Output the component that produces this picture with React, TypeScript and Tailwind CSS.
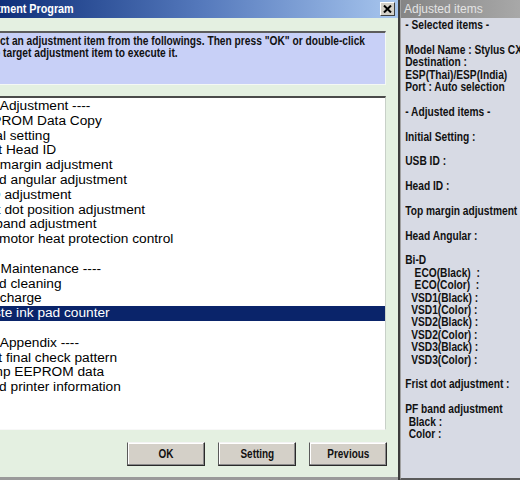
import React from "react";

const SANS = { fontFamily: '"Liberation Sans", Arial, sans-serif' };

const listItems = [
  "----- Adjustment ----",
  "EEPROM Data Copy",
  "Initial setting",
  "Print Head ID",
  "Top margin adjustment",
  "Head angular adjustment",
  "Bi-D adjustment",
  "First dot position adjustment",
  "PF  motor heat protection control",
  "",
  "----- Maintenance ----",
  "Head cleaning",
  "Ink  charge",
  "Waste ink pad counter",
  "",
  "----- Appendix ----",
  "Print final check pattern",
  "Dump EEPROM data",
  "Read printer information",
];

// insert PF band before PF motor
listItems.splice(8, 0, "PF band adjustment");

const rightLines: { t: string; pl?: string }[] = [
  { t: "- Selected items -" },
  { t: "" },
  { t: "Model Name : Stylus CX" },
  { t: "Destination :" },
  { t: "ESP(Thai)/ESP(India)" },
  { t: "Port : Auto selection" },
  { t: "" },
  { t: "- Adjusted items -" },
  { t: "" },
  { t: "Initial Setting :" },
  { t: "" },
  { t: "USB ID :" },
  { t: "" },
  { t: "Head ID :" },
  { t: "" },
  { t: "Top margin adjustment :" },
  { t: "" },
  { t: "Head Angular :" },
  { t: "" },
  { t: "Bi-D" },
  { t: "ECO(Black)  :", pl: "eco" },
  { t: "ECO(Color)  :", pl: "eco" },
  { t: "VSD1(Black) :", pl: "vsd" },
  { t: "VSD1(Color) :", pl: "vsd" },
  { t: "VSD2(Black) :", pl: "vsd" },
  { t: "VSD2(Color) :", pl: "vsd" },
  { t: "VSD3(Black) :", pl: "vsd" },
  { t: "VSD3(Color) :", pl: "vsd" },
  { t: "" },
  { t: "Frist dot adjustment :" },
  { t: "" },
  { t: "PF band adjustment" },
  { t: "Black :", pl: "pf" },
  { t: "Color :", pl: "pf" },
];

function Btn({ label }: { label: string }) {
  return (
    <button
      className="w-[78px] h-[24px] flex items-center justify-center bg-[#d4d0c8] border border-t-[#f4f4f4] border-l-[#5a5a5a] border-r-[#2a2a2a] border-b-[#2a2a2a] shadow-[inset_-1px_-1px_0_#8a8a8a,inset_1px_1px_0_#ffffff]"
    >
      <span className="inline-block scale-x-[0.83] text-[12px] font-bold text-[#111] leading-none" style={SANS}>
        {label}
      </span>
    </button>
  );
}

export default function App() {
  return (
    <div className="w-[520px] h-[480px] flex overflow-hidden bg-[#d7dae4]">
      {/* Dialog */}
      <div className="w-[398px] h-[480px] shrink-0 flex flex-col bg-[#e4f0e1] overflow-hidden border-b-[3px] border-b-[#9a9a9a]">
        {/* Title bar */}
        <div className="h-[18px] shrink-0 flex items-center justify-between bg-gradient-to-r from-[#0f2f7a] via-[#5478bb] to-[#a8c6ee] overflow-hidden">
          <span
            className="inline-block origin-left scale-x-[0.83] ml-[-33px] text-white text-[13px] font-bold whitespace-nowrap"
            style={SANS}
          >
            Adjustment Program
          </span>
          <div className="w-[15px] h-[14px] mr-[3px] bg-[#d4d0c8] border border-t-white border-l-white border-r-[#404040] border-b-[#404040] flex items-center justify-center">
            <svg width="9" height="8" viewBox="0 0 9 8">
              <path d="M1 0.5 L8 7.5 M8 0.5 L1 7.5" stroke="#000" strokeWidth="2" />
            </svg>
          </div>
        </div>

        {/* Instruction box */}
        <div className="mt-[13px] mr-[12px] h-[54px] shrink-0 bg-[#c8d0f7] border-t-2 border-t-[#5c5c5c] border-b border-b-[#f4f8f4] border-r border-r-[#f4f8f4] overflow-hidden">
          <div
            className="origin-top-left scale-x-[0.85] ml-[-21px] pt-[2px] text-[12px] leading-[12px] font-bold text-[#111] whitespace-nowrap"
            style={SANS}
          >
            <div>Select an adjustment item from the followings. Then press "OK" or double-click</div>
            <div className="pl-[7px]">the target adjustment item to execute it.</div>
          </div>
        </div>

        {/* List box */}
        <div className="mt-[11px] mr-[12px] h-[334px] shrink-0 bg-white border-t-2 border-t-[#4a4a4a] border-b border-b-[#f8f8f8] border-r border-r-[#c8d0c8] overflow-hidden">
          <div className="pt-[1px]">
            {listItems.map((item, i) => {
              const sel = i === 14;
              return (
                <div
                  key={i}
                  className={
                    "h-[14.8px] leading-[14.8px] text-[13.7px] whitespace-pre " +
                    (sel ? "bg-[#0a246a] text-white" : "text-black")
                  }
                  style={SANS}
                >
                  <span className="ml-[-26px]">{item || " "}</span>
                </div>
              );
            })}
          </div>
        </div>

        {/* Buttons */}
        <div className="mt-[12px] mr-[11px] flex justify-end gap-[13px]">
          <Btn label="OK" />
          <Btn label="Setting" />
          <Btn label="Previous" />
        </div>
      </div>

      {/* Separator */}
      <div className="w-[2px] shrink-0 bg-[#3c3c3c]" />

      {/* Right panel */}
      <div className="flex-1 min-w-0 flex flex-col overflow-hidden bg-[#d7dae4] border-l border-l-[#a0a0a0] border-b-2 border-b-[#5a5a5a]">
        <div className="h-[18px] shrink-0 flex items-center bg-gradient-to-r from-[#858585] to-[#a8a8a8] pl-[3px]">
          <span className="text-[12px] text-[#e4e4e4] whitespace-nowrap" style={SANS}>
            Adjusted items
          </span>
        </div>
        <div
          className="origin-top-left scale-x-[0.85] pl-[5px] pt-[1px] text-[12px] leading-[12.4px] font-bold text-[#111] whitespace-pre"
          style={SANS}
        >
          {rightLines.map((l, i) => (
            <div
              key={i}
              className={
                "h-[12.4px] " +
                (l.pl === "eco" ? "pl-[11px]" : l.pl === "vsd" ? "pl-[7px]" : l.pl === "pf" ? "pl-[4px]" : "")
              }
            >
              {l.t || " "}
            </div>
          ))}
        </div>
      </div>
    </div>
  );
}
